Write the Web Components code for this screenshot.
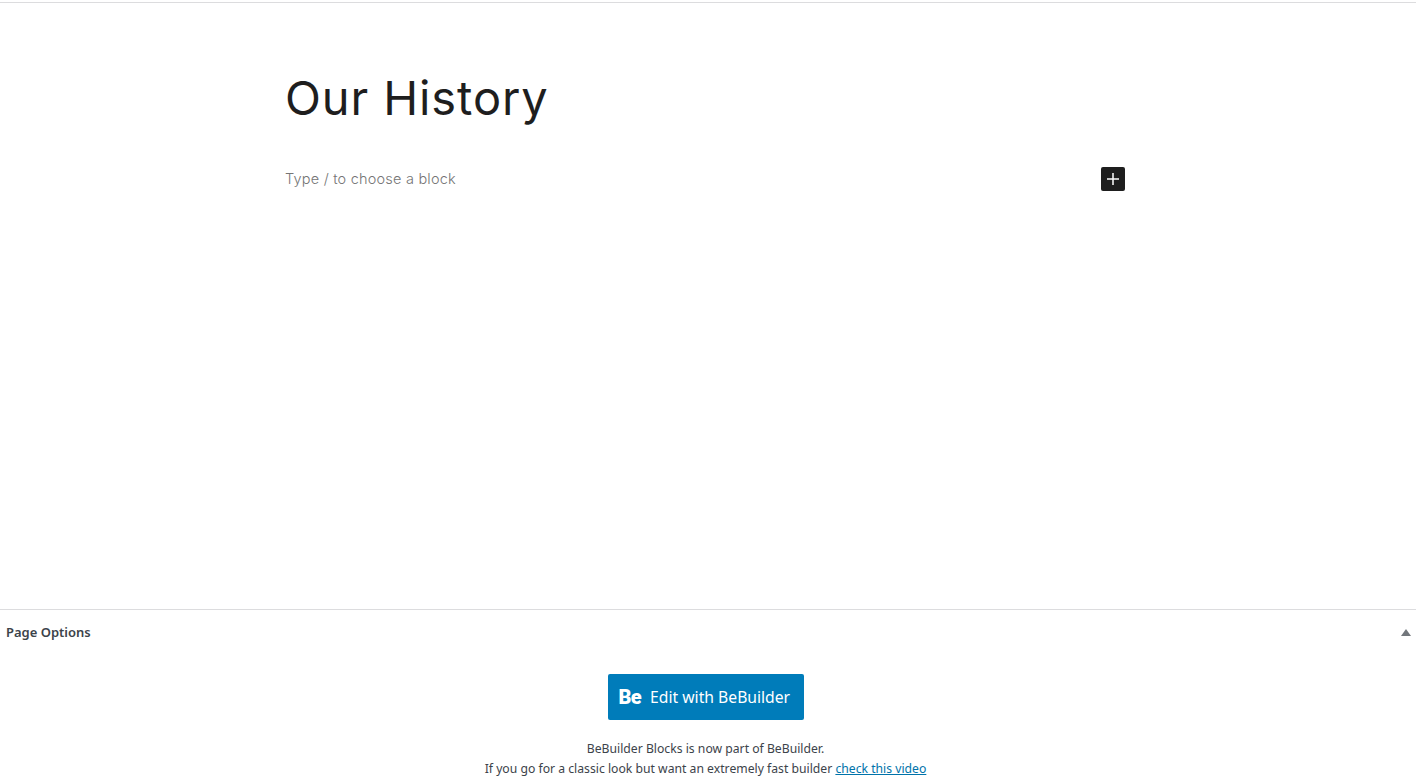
<!DOCTYPE html>
<html lang="en">
<head>
<meta charset="utf-8">
<title>Our History</title>
<style>
  html, body { margin: 0; height: 100%; background: #fff; overflow: hidden; }
</style>
</head>
<body>
<editor-page>
  <editor-canvas slot="canvas" heading="Our History" placeholder="Type / to choose a block"></editor-canvas>
  <meta-box slot="meta" label="Page Options">
    <builder-panel></builder-panel>
  </meta-box>
</editor-page>

<script>
customElements.define('editor-page', class EditorPage extends HTMLElement {
  constructor() {
    super();
    this.attachShadow({mode: 'open'});
    this.shadowRoot.innerHTML = `
    <style>
      :host {
        display: flex;
        flex-direction: column;
        height: 780px;
        padding-top: 2px;
        box-sizing: border-box;
      }
      .canvas {
        height: 606px;
        padding-right: 6px;
        border-top: 1px solid #dcdcde;
        border-bottom: 1px solid #dcdcde;
      }
    </style>
    <div class="canvas"><slot name="canvas"></slot></div>
    <slot name="meta"></slot>
    `
  }
})

customElements.define('editor-canvas', class EditorCanvas extends HTMLElement {
  constructor() {
    super();
    this.attachShadow({mode: 'open'});
    this.shadowRoot.innerHTML = `
    <style>
      :host {
        display: block;
        width: 840px;
        margin: 0 auto;
        font-family: "Inter", "Liberation Sans", sans-serif;
        color: #1e1e1e;
      }
      h1 {
        margin: 0;
        padding-top: 63px;
        font-size: 47px;
        line-height: 64px;
        font-weight: 370;
        letter-spacing: 0.9px;
      }
      .row {
        display: flex;
        align-items: center;
        justify-content: space-between;
        margin-top: 37px;
        height: 24px;
      }
      .hint {
        padding-bottom: 2px;
        font-size: 14.5px;
        font-weight: 350;
        letter-spacing: 0.21px;
        color: #757575;
      }
      button {
        display: flex;
        align-items: center;
        justify-content: center;
        width: 24px;
        height: 24px;
        padding: 0;
        border: 0;
        border-radius: 2px;
        background: #1e1e1e;
      }
    </style>
    <h1></h1>
    <div class="row">
      <span class="hint"></span>
      <button aria-label="Add block">
        <svg width="24" height="24" viewBox="0 0 24 24" fill="#fff"><path d="M11.25 6h1.5v5.25H18v1.5h-5.25V18h-1.5v-5.25H6v-1.5h5.25z"/></svg>
      </button>
    </div>
    `
  }

  connectedCallback() {
    this.shadowRoot.querySelector('h1').textContent = this.getAttribute('heading');
    this.shadowRoot.querySelector('.hint').textContent = this.getAttribute('placeholder');
  }
})

customElements.define('meta-box', class MetaBox extends HTMLElement {
  constructor() {
    super();
    this.attachShadow({mode: 'open'});
    this.shadowRoot.innerHTML = `
    <style>
      :host {
        display: block;
        font-family: "Noto Sans", "Liberation Sans", sans-serif;
      }
      header {
        display: flex;
        align-items: center;
        justify-content: space-between;
        height: 44px;
        padding: 0 5px 0 6px;
      }
      h2 {
        margin: 0;
        font-size: 13px;
        font-weight: 600;
        color: #3c434a;
      }
      .toggle {
        width: 0;
        height: 0;
        border-left: 5px solid transparent;
        border-right: 5px solid transparent;
        border-bottom: 7px solid #72777c;
      }
    </style>
    <header>
      <h2></h2>
      <span class="toggle"></span>
    </header>
    <slot></slot>
    `
  }

  connectedCallback() {
    this.shadowRoot.querySelector('h2').textContent = this.getAttribute('label');
  }
})

customElements.define('builder-panel', class BuilderPanel extends HTMLElement {
  constructor() {
    super();
    this.attachShadow({mode: 'open'});
    this.shadowRoot.innerHTML = `
    <style>
      :host {
        display: flex;
        flex-direction: column;
        align-items: center;
        padding: 20px 5px 0 0;
        font-family: "Noto Sans", "Liberation Sans", sans-serif;
        font-size: 12.2px;
        line-height: 20px;
        color: #3c434a;
        text-align: center;
      }
      .edit {
        display: flex;
        align-items: center;
        gap: 9px;
        box-sizing: border-box;
        width: 196px;
        height: 46px;
        padding-left: 11px;
        margin-bottom: 19px;
        border-radius: 2px;
        background: #007cba;
        color: #fff;
        font-size: 15.7px;
        text-decoration: none;
      }
      .logo {
        font-family: "Roboto", "Liberation Sans", sans-serif;
        font-size: 20px;
        font-weight: 900;
        letter-spacing: -0.6px;
      }
      a.video { color: #0073aa; }
    </style>
    <a class="edit" href="#"><span class="logo">Be</span>Edit with BeBuilder</a>
    <div>BeBuilder Blocks is now part of BeBuilder.</div>
    <div>If you go for a classic look but want an extremely fast builder <a class="video" href="#">check this video</a></div>
    `
  }
})
</script>
</body>
</html>
